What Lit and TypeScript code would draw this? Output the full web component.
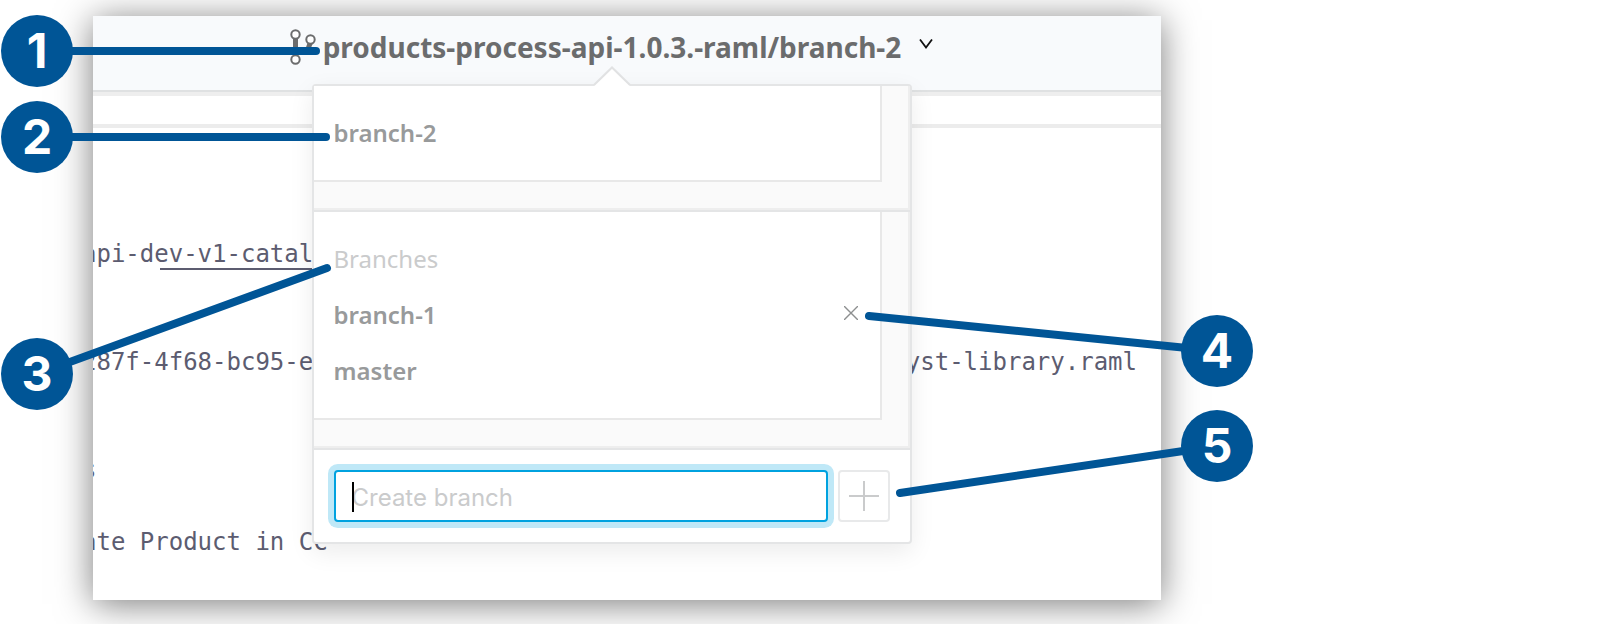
import { LitElement, html, svg, css } from "lit";
import { customElement, property } from "lit/decorators.js";

interface Callout {
  label: string;
  x: number;
  y: number;
  toX: number;
  toY: number;
}

const CALLOUTS: Callout[] = [
  { label: "1", x: 37, y: 51, toX: 316, toY: 51 },
  { label: "2", x: 37, y: 137, toX: 326, toY: 137 },
  { label: "3", x: 37, y: 374, toX: 327, toY: 268 },
  { label: "4", x: 1217, y: 351, toX: 869, toY: 316 },
  { label: "5", x: 1217, y: 446, toX: 900, toY: 493 },
];

@customElement("branch-menu")
export class BranchMenu extends LitElement {
  @property() current = "";
  @property({ attribute: false }) branches: { name: string; removable: boolean }[] = [];

  static styles = css`
    :host {
      display: block;
      box-sizing: border-box;
      border: 2px solid #e4e5e6;
      border-radius: 4px;
      background: #fff;
      box-shadow: 0 8px 24px rgba(0, 0, 0, 0.08);
      font: 600 24px/56px "Noto Sans", "Open Sans", sans-serif;
      color: #989a9b;
    }
    .arrow {
      position: absolute;
      left: 50%;
      bottom: 100%;
      width: 40px;
      height: 20px;
      margin-left: -20px;
      display: block;
    }
    .section {
      padding: 0 26px 26px 0;
      background: #fafafa;
      border-right: 2px solid #eeeeee;
      border-bottom: 2px solid #eeeeee;
      box-shadow: 0 2px #e4e5e6;
      margin-bottom: 2px;
    }
    .list {
      margin: 0;
      padding: 19px 18px 19px 20px;
      list-style: none;
      background: #fff;
      border-right: 2px solid #e8e8e8;
      border-bottom: 2px solid #e8e8e8;
    }
    .row {
      display: flex;
      align-items: center;
      justify-content: space-between;
      height: 56px;
    }
    .heading {
      font-weight: 400;
      color: #cacbcc;
    }
    button {
      padding: 0;
      font: inherit;
      color: inherit;
      background: none;
      border: 0;
      cursor: pointer;
    }
    .remove {
      display: flex;
      padding: 4px 4px 8px;
    }
    .create {
      display: flex;
      gap: 10px;
      padding: 20px;
    }
    .field {
      position: relative;
      flex: 1;
      display: flex;
    }
    .input {
      flex: 1;
      min-width: 0;
      box-sizing: border-box;
      height: 52px;
      padding: 2px 16px 0;
      border: 2px solid #00a2df;
      border-radius: 4px;
      outline: none;
      box-shadow: 0 0 0 6px #bfe8f7;
      font: 400 24px/32px Inter, sans-serif;
      color: #58595a;
      background: #fff;
      caret-color: transparent;
    }
    .input::placeholder {
      color: #cacbcc;
      opacity: 1;
    }
    .caret {
      position: absolute;
      left: 18px;
      top: 12px;
      width: 2px;
      height: 30px;
      background: #000;
    }
    .add {
      display: flex;
      align-items: center;
      justify-content: center;
      box-sizing: border-box;
      width: 52px;
      height: 52px;
      border: 2px solid #e8e9ea;
      border-radius: 4px;
    }
  `;

  render() {
    return html`
      <svg class="arrow" viewBox="0 0 40 20" aria-hidden="true">
        <path d="M2 20 L20 2 L38 20Z" fill="#fff" />
        <path d="M2 19 L20 1.5 L38 19" fill="none" stroke="#e1e2e3" stroke-width="2" />
      </svg>
      <div class="section">
        <ul class="list">
          <li class="row"><button>${this.current}</button></li>
        </ul>
      </div>
      <div class="section">
        <ul class="list">
          <li class="row heading">Branches</li>
          ${this.branches.map(
            (b) => html`<li class="row">
              <button>${b.name}</button>
              ${b.removable
                ? html`<button class="remove" aria-label="Delete ${b.name}">
                    <svg width="14" height="14" viewBox="0 0 14 14">
                      <path d="M0 0 L14 14 M14 0 L0 14" stroke="#8d8f90" stroke-width="1.4" />
                    </svg>
                  </button>`
                : null}
            </li>`
          )}
        </ul>
      </div>
      <div class="create">
        <div class="field">
          <input class="input" type="text" aria-label="Create branch" placeholder="Create branch" />
          <span class="caret"></span>
        </div>
        <button class="add" aria-label="Add branch">
          <svg width="30" height="30" viewBox="0 0 30 30">
            <path d="M15 0 V30 M0 15 H30" stroke="#cacbcc" stroke-width="2" />
          </svg>
        </button>
      </div>
    `;
  }
}

@customElement("app-root")
export class AppRoot extends LitElement {
  static styles = css`
    :host {
      display: block;
      overflow: hidden;
      background: #fff;
    }
    .figure {
      position: relative;
      margin: 0;
      padding: 16px 0 24px 93px;
    }
    .window {
      max-width: 1068px;
      background: #fff;
      box-shadow: 0 4px 34px rgba(0, 0, 0, 0.52);
    }
    .header {
      display: flex;
      justify-content: center;
      padding-right: 31px;
      height: 74px;
      background: #f8fafc;
      border-bottom: 2px solid #dfe1e2;
    }
    .picker {
      position: relative;
      display: flex;
    }
    .trigger {
      display: flex;
      align-items: center;
      padding: 0 0 12px;
      border: 0;
      background: none;
      font: 700 28px/36px "Noto Sans", "Open Sans", sans-serif;
      color: #6b6c6d;
      cursor: pointer;
      white-space: nowrap;
    }
    .branch-icon {
      margin-right: 7px;
    }
    .chevron {
      margin: 0 0 6px 18px;
    }
    .menu {
      position: absolute;
      z-index: 1;
      top: 68px;
      left: 50%;
      width: 600px;
      margin-left: -300px;
    }
    .toolbar {
      height: 28px;
      border-top: 4px solid #eeeeee;
      border-bottom: 4px solid #ececec;
    }
    .code {
      margin: 0;
      padding-bottom: 40px;
      overflow: hidden;
      font: 400 24px/36px "DejaVu Sans Mono", monospace;
      color: #5c5c70;
    }
    .line {
      display: flex;
      justify-content: space-between;
      height: 36px;
      margin-left: -11px;
      padding-right: 24px;
      white-space: pre;
    }
    .token {
      display: inline-block;
      background: linear-gradient(#5c5c70, #5c5c70) 6px 32px / 100% 2px no-repeat;
    }
    .leaders {
      position: absolute;
      z-index: 2;
      inset: 0;
      width: 100%;
      height: 100%;
      pointer-events: none;
    }
    .badge {
      position: absolute;
      z-index: 3;
      width: 72px;
      height: 72px;
      margin: -36px 0 0 -36px;
      border-radius: 50%;
      background: #005596;
      color: #fff;
      font: 700 48px/72px Inter, "Liberation Sans", sans-serif;
      text-align: center;
    }
  `;

  private lines = [
    html``,
    html``,
    html``,
    html`<span>api-d<span class="token">ev-v1-catal</span></span>`,
    html``,
    html``,
    html`<span>287f-4f68-bc95-e</span><span>yst-library.raml</span>`,
    html``,
    html``,
    html`<span>s</span>`,
    html``,
    html`<span>ate Product in CC</span>`,
  ];

  render() {
    return html`
      <figure class="figure">
        <div class="window">
          <header class="header">
            <div class="picker">
              <button class="trigger" aria-expanded="true">
                <svg class="branch-icon" width="26" height="36" viewBox="0 0 26 36" fill="none" stroke="#6b6c6d">
                  <path d="M5.5 9 V26" stroke-width="5" />
                  <path d="M20.5 13 L18 20 C16 23 9 22 6 25" stroke-width="5" />
                  <circle cx="5.5" cy="5.5" r="4.2" stroke-width="2" fill="#fff" />
                  <circle cx="20.5" cy="10.5" r="4.2" stroke-width="2" fill="#fff" />
                  <circle cx="5.5" cy="30.5" r="4.2" stroke-width="2" fill="#fff" />
                </svg>
                <span>products-process-api-1.0.3.-raml/branch-2</span>
                <svg class="chevron" width="14" height="10" viewBox="0 0 14 10">
                  <path d="M1 0.5 L7 8.5 L13 0.5" fill="none" stroke="#111" stroke-width="1.8" />
                </svg>
              </button>
              <branch-menu
                class="menu"
                current="branch-2"
                .branches=${[
                  { name: "branch-1", removable: true },
                  { name: "master", removable: false },
                ]}
              ></branch-menu>
            </div>
          </header>
          <div class="toolbar"></div>
          <div class="code">${this.lines.map((l) => html`<div class="line">${l}</div>`)}</div>
        </div>
        <svg class="leaders" aria-hidden="true">
          ${CALLOUTS.map(
            (c) => svg`<line x1=${c.x} y1=${c.y} x2=${c.toX} y2=${c.toY}
              stroke="#005596" stroke-width="8" stroke-linecap="round" />`
          )}
        </svg>
        ${CALLOUTS.map((c) => html`<span class="badge" style="left:${c.x}px;top:${c.y}px">${c.label}</span>`)}
      </figure>
    `;
  }
}
